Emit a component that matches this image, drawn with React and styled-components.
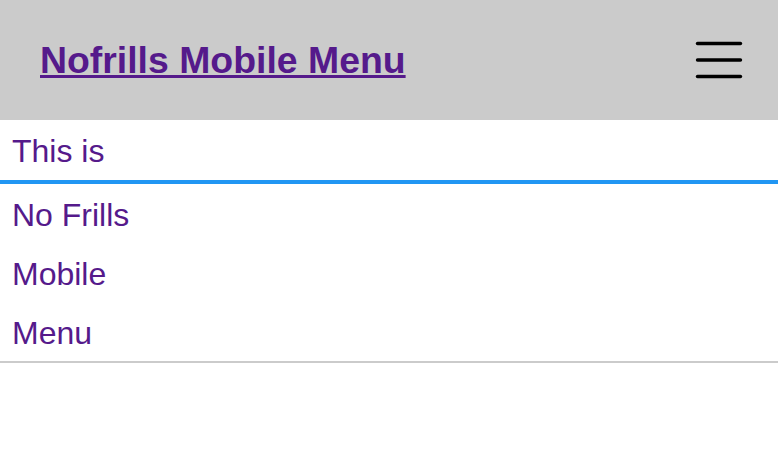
import React from 'react';
import styled, { createGlobalStyle } from 'styled-components';

const GlobalStyle = createGlobalStyle`
    body {
        margin: 0;
        background: #fff;
        font-family: "Liberation Sans", Arial, Helvetica, sans-serif;
    }
`;

const items = ['No Frills', 'Mobile', 'Menu'];

const App = () => {
    return (
        <Page>
            <GlobalStyle />
            <Header>
                <Title href="#">Nofrills Mobile Menu</Title>
                <MenuButton aria-label="menu">
                    <svg width="46" height="36" viewBox="0 0 46 36">
                        <g stroke="#000" strokeWidth="3.4" strokeLinecap="round">
                            <line x1="1.5" y1="1.5" x2="44.5" y2="1.5" />
                            <line x1="1.5" y1="18" x2="44.5" y2="18" />
                            <line x1="1.5" y1="34.5" x2="44.5" y2="34.5" />
                        </g>
                    </svg>
                </MenuButton>
            </Header>
            <Menu>
                <Item $first>This is</Item>
                {items.map(item => (
                    <Item key={item}>{item}</Item>
                ))}
            </Menu>
        </Page>
    );
};

const Page = styled.div`
    width: 100%;
`;

const Header = styled.header`
    display: flex;
    align-items: center;
    justify-content: space-between;
    height: 120px;
    padding: 0 36px 0 40px;
    box-sizing: border-box;
    background-color: #cbcbcb;
`;

const Title = styled.a`
    font-size: 37.4px;
    font-weight: bold;
    color: #551a8b;
    text-decoration: underline;
    line-height: 1;
    margin-top: 2px;
`;

const MenuButton = styled.div`
    display: flex;
    align-items: center;
    margin-top: -1px;
    svg {
        display: block;
        overflow: visible;
    }
`;

const Menu = styled.ul`
    list-style: none;
    margin: 0;
    padding: 0;
    border-bottom: 2px solid #cbcbcb;
`;

const Item = styled.li`
    font-size: 32px;
    line-height: 36px;
    color: #551a8b;
    padding: ${p => (p.$first ? '13px 12px 11px' : '13px 12px 10px')};
    border-bottom: ${p => (p.$first ? '4px solid #2196f3' : 'none')};
`;

export default App;
